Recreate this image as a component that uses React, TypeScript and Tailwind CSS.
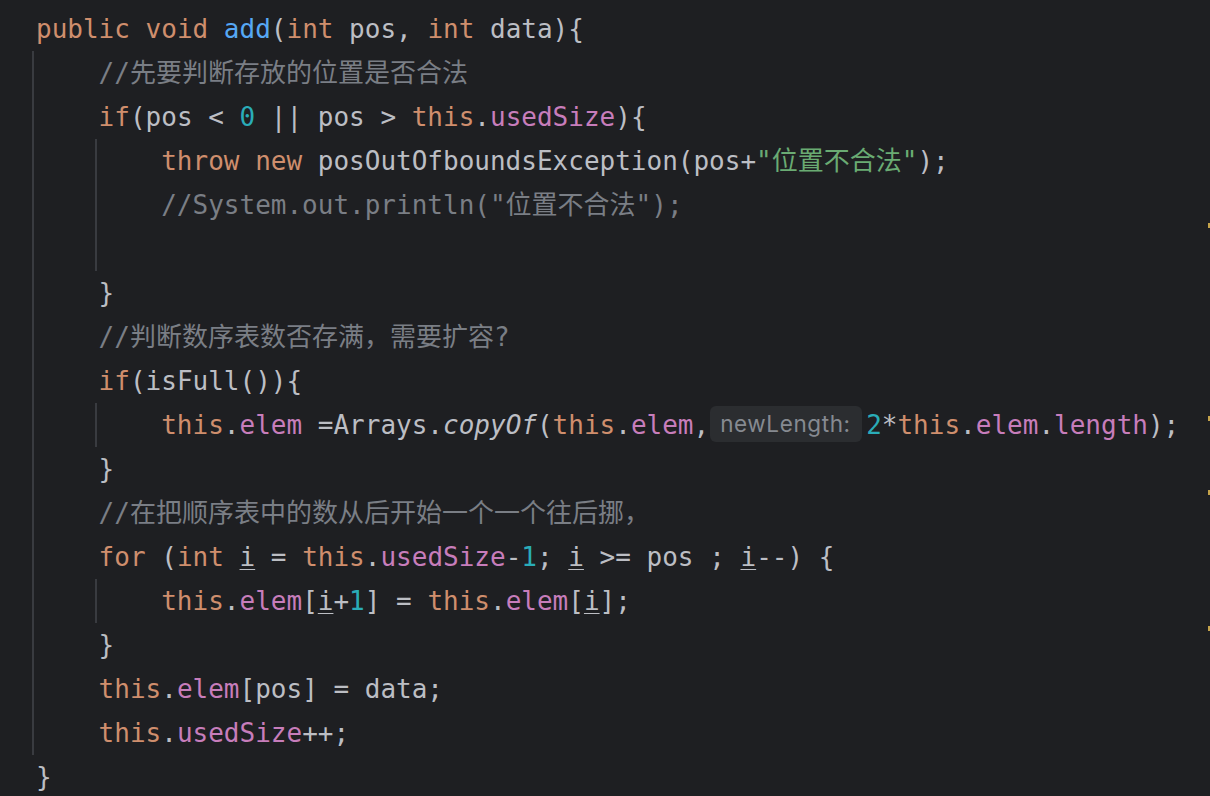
import React from "react";

const K = ({ children }: { children: React.ReactNode }) => <span className="text-[#cf8e6d]">{children}</span>;
const F = ({ children }: { children: React.ReactNode }) => <span className="text-[#56a8f5]">{children}</span>;
const N = ({ children }: { children: React.ReactNode }) => <span className="text-[#2aacb8]">{children}</span>;
const P = ({ children }: { children: React.ReactNode }) => <span className="text-[#c77dbb]">{children}</span>;
const S = ({ children }: { children: React.ReactNode }) => <span className="text-[#6aab73]">{children}</span>;
const C = ({ children }: { children: React.ReactNode }) => <span className="text-[#7a7e85]">{children}</span>;
const U = ({ children }: { children: React.ReactNode }) => (
  <span className="underline decoration-1 underline-offset-[3px]">{children}</span>
);

const Hint = () => (
  <span className="inline-block align-top mt-[3px] ml-[1px] mr-[4px] h-[36px] w-[152px] rounded-[6px] bg-[#2b2d30] pl-[10px] font-['Inter',sans-serif] text-[22.5px] leading-[36px] tracking-[0.6px] text-[#868a91]">
    newLength:
  </span>
);

type Line = { level: number; content: React.ReactNode };

const lines: Line[] = [
  {
    level: 0,
    content: (
      <>
        <K>public</K> <K>void</K> <F>add</F>(<K>int</K> pos, <K>int</K> data){"{"}
      </>
    ),
  },
  { level: 1, content: <C>//先要判断存放的位置是否合法</C> },
  {
    level: 1,
    content: (
      <>
        <K>if</K>(pos {"<"} <N>0</N> || pos {">"} <K>this</K>.<P>usedSize</P>){"{"}
      </>
    ),
  },
  {
    level: 2,
    content: (
      <>
        <K>throw</K> <K>new</K> posOutOfboundsException(pos+<S>"位置不合法"</S>);
      </>
    ),
  },
  { level: 2, content: <C>//System.out.println("位置不合法");</C> },
  { level: 2, content: null },
  { level: 1, content: <>{"}"}</> },
  { level: 1, content: <C>//判断数序表数否存满，需要扩容?</C> },
  {
    level: 1,
    content: (
      <>
        <K>if</K>(isFull()){"{"}
      </>
    ),
  },
  {
    level: 2,
    content: (
      <>
        <K>this</K>.<P>elem</P> =Arrays.<span className="italic">copyOf</span>(<K>this</K>.<P>elem</P>,
        <Hint />
        <N>2</N>*<K>this</K>.<P>elem</P>.<P>length</P>);
      </>
    ),
  },
  { level: 1, content: <>{"}"}</> },
  { level: 1, content: <C>//在把顺序表中的数从后开始一个一个往后挪，</C> },
  {
    level: 1,
    content: (
      <>
        <K>for</K> (<K>int</K> <U>i</U> = <K>this</K>.<P>usedSize</P>-<N>1</N>; <U>i</U> {">="} pos ; <U>i</U>--) {"{"}
      </>
    ),
  },
  {
    level: 2,
    content: (
      <>
        <K>this</K>.<P>elem</P>[<U>i</U>+<N>1</N>] = <K>this</K>.<P>elem</P>[<U>i</U>];
      </>
    ),
  },
  { level: 1, content: <>{"}"}</> },
  {
    level: 1,
    content: (
      <>
        <K>this</K>.<P>elem</P>[pos] = data;
      </>
    ),
  },
  {
    level: 1,
    content: (
      <>
        <K>this</K>.<P>usedSize</P>++;
      </>
    ),
  },
  { level: 0, content: <>{"}"}</> },
];

const markers = [223, 416, 490, 626];

export default function App() {
  return (
    <div className="relative h-[796px] w-[1210px] overflow-hidden bg-[#1e1f22] pt-[7px] font-['DejaVu_Sans_Mono','Noto_Sans_CJK_SC',monospace] text-[26px] text-[#bcbec4]">
      {lines.map((ln, i) => (
        <div key={i} className="flex h-[44px] pl-[32px]">
          {Array.from({ length: ln.level }).map((_, j) => (
            <div key={j} className="h-full w-[4ch] shrink-0 border-l-2 border-[#393b40]" />
          ))}
          <div className="ml-[4px] whitespace-pre leading-[44px]">{ln.content}</div>
        </div>
      ))}
      {markers.map((y) => (
        <div key={y} className="absolute right-0 h-[5px] w-[2px] bg-[#c5a34a]" style={{ top: y }} />
      ))}
    </div>
  );
}
